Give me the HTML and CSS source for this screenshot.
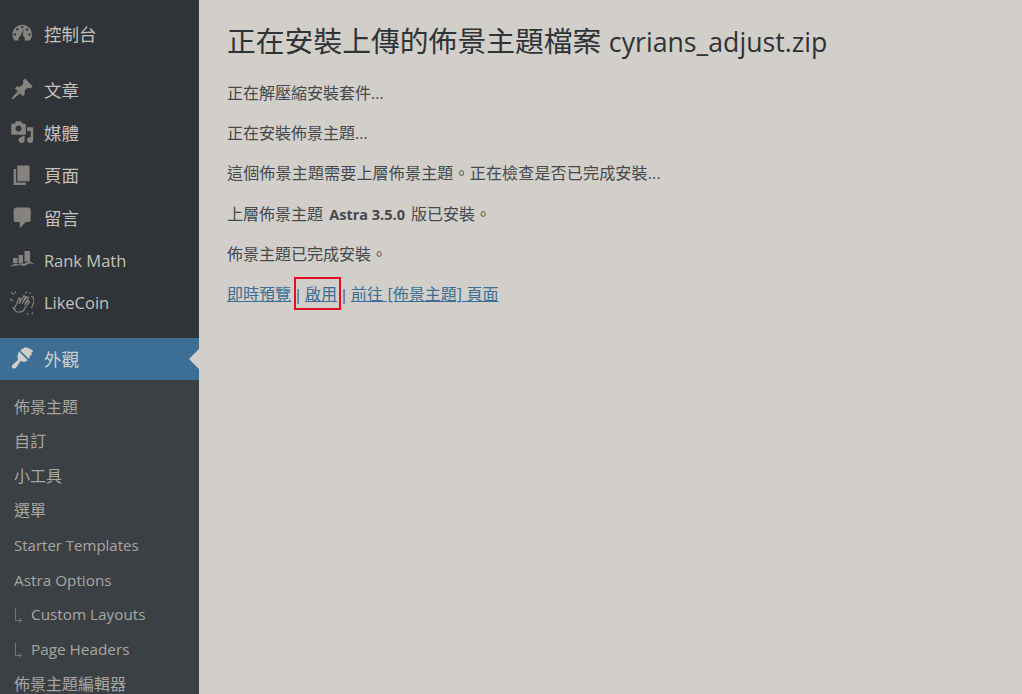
FILE: index.html
```html
<!DOCTYPE html>
<html lang="zh-TW">
<head>
    <meta charset="UTF-8">
    <meta name="viewport" content="width=device-width, initial-scale=1.0">
    <title>正在安裝上傳的佈景主題檔案</title>
    <link rel="stylesheet" href="styles.css">
</head>
<body>
    <div class="sidebar">
        <div class="menu-item first">
            <svg class="icon" viewBox="0 0 20 20"><path fill-rule="evenodd" d="M3.760 16h12.480c1.100-1.370 1.760-3.110 1.760-5 0-4.420-3.580-8-8-8s-8 3.580-8 8c0 1.890.66 3.630 1.760 5zM10 4c.55 0 1 .45 1 1s-.45 1-1 1-1-.45-1-1 .45-1 1-1zM6 6c.55 0 1 .45 1 1s-.45 1-1 1-1-.45-1-1 .45-1 1-1zm8 0c.55 0 1 .45 1 1s-.45 1-1 1-1-.45-1-1 .45-1 1-1zm-5.370 6.380L11 7l-.43 5.380c.97.46 1.630 1.310 1.630 2.290 0 .5-.17.97-.45 1.330H7.450c-.28-.36-.45-.83-.45-1.330 0-.98.66-1.830 1.630-2.290zM4 10c.55 0 1 .45 1 1s-.45 1-1 1-1-.45-1-1 .45-1 1-1zm12 0c.55 0 1 .45 1 1s-.45 1-1 1-1-.45-1-1 .45-1 1-1z"/></svg>
            <span>控制台</span>
        </div>
        <div class="menu-item gap">
            <svg class="icon" viewBox="0 0 20 20"><path d="M10.440 3.020l1.820-1.820 6.360 6.350-1.830 1.820c-1.050-.68-2.480-.57-3.410.36l-.75.75c-.92.93-1.040 2.350-.35 3.410l-1.830 1.820-2.410-2.410-2.800 2.790c-.42.42-3.380 2.710-3.800 2.290s1.860-3.390 2.280-3.810l2.790-2.790L4.100 9.360l1.830-1.820c1.050.69 2.480.57 3.400-.36l.75-.75c.93-.92 1.050-2.350.36-3.410z"/></svg>
            <span>文章</span>
        </div>
        <div class="menu-item">
            <svg class="icon" viewBox="0 0 20 20"><path fill-rule="evenodd" d="M13 11V4c0-.55-.45-1-1-1h-1.670L9 1H5L3.670 3H2c-.55 0-1 .45-1 1v7c0 .55.45 1 1 1h10c.55 0 1-.45 1-1zM7 4.500c1.380 0 2.500 1.120 2.500 2.500S8.380 9.500 7 9.500 4.500 8.380 4.500 7 5.620 4.500 7 4.500zM14 6h5v10.500c0 1.380-1.120 2.500-2.500 2.500S14 17.880 14 16.500s1.120-2.500 2.500-2.500c.17 0 .34.020.5.050V9h-3V6zm-4 8.050V13h2v3.500c0 1.380-1.120 2.500-2.500 2.500S7 17.880 7 16.500 8.120 14 9.500 14c.17 0 .34.020.5.050z"/></svg>
            <span>媒體</span>
        </div>
        <div class="menu-item">
            <svg class="icon" viewBox="0 0 20 20"><path d="M6 15V2h10v13H6zm-1 1h8v2H3V5h2v11z"/></svg>
            <span>頁面</span>
        </div>
        <div class="menu-item">
            <svg class="icon" viewBox="0 0 20 20"><path d="M5 2h10c1.100 0 2 .9 2 2v8c0 1.100-.9 2-2 2h-2l-5 5v-5H5c-1.100 0-2-.9-2-2V4c0-1.100.9-2 2-2z"/></svg>
            <span>留言</span>
        </div>
        <div class="menu-item">
            <svg class="icon" viewBox="0 0 24.400 24.400"><path d="M3 10h4.500v5H3zM8.500 7H13v8.500H8.500zM14.500 3H20v10.500h-5.500z"/><path d="M0 18.500l5-3 4.500 1 5-1 5-2.500 5 3-5-.8-5 2.800-5.500-1z"/></svg>
            <span>Rank Math</span>
        </div>
        <div class="menu-item">
            <svg class="icon line" viewBox="0 0 24.400 24.400"><path d="M6 14l3-7 1.500.7-1.500 5 5-8 1.500 1-3.500 7 5-7 1.500 1-4 7 4-4 1 1-4.500 6c-1 3-3 4.500-6 4.500-3 0-4.500-2-4.500-4.500z"/><path d="M15 2l2-1M19 2.500l2-.5M21 5.500l2.500 1 .5 4.500-2.500 6"/><path d="M1.500 1l2 3M5 .5l.5 2M0 8l3 2M2.500 16l2 3M17 23.500l1-1.500M22 23l1-1.500"/></svg>
            <span>LikeCoin</span>
        </div>
        <div class="menu-item gap current">
            <svg class="icon" viewBox="0 0 20 20"><path d="M8.300 3.400l7.300 7.300c.8-1.200 1-3.100 1-3.100.2-.7 1.500-.2 1.800-.9-.4-.3-1.200-.4-1.100-1.100.2-.7 1.700-.8 1.700-1.600-1.600-1.100-4-2.700-6.500-2.900z"/><path d="M7.300 4.400l7.300 7.300-2.300 1.200c-.8.400-1.700.2-2.300-.3l-1.300-.2-3.300 4.800c-.9 1.200-2.400 1.700-3.300 1-.9-.7-.8-2 .3-3l4.200-3.800-.2-1.400c-.4-.6-.5-1.400-.2-2.100z"/></svg>
            <span>外觀</span>
        </div>
        <ul class="submenu">
            <li>佈景主題</li>
            <li>自訂</li>
            <li>小工具</li>
            <li>選單</li>
            <li>Starter Templates</li>
            <li>Astra Options</li>
            <li><svg class="arrow" viewBox="0 0 9 15"><path d="M1.500 0v12.500h6M5 10l2.500 2.500L5 15"/></svg>Custom Layouts</li>
            <li><svg class="arrow" viewBox="0 0 9 15"><path d="M1.500 0v12.500h6M5 10l2.500 2.500L5 15"/></svg>Page Headers</li>
            <li>佈景主題編輯器</li>
        </ul>
    </div>

    <div class="content">
        <h1>正在安裝上傳的佈景主題檔案 <span class="latin">cyrians_adjust.zip</span></h1>
        <p>正在解壓縮安裝套件...</p>
        <p>正在安裝佈景主題...</p>
        <p class="loose">這個佈景主題需要上層佈景主題。正在檢查是否已完成安裝...</p>
        <p>上層佈景主題 <strong class="latin">Astra 3.5.0</strong> 版已安裝。</p>
        <p>佈景主題已完成安裝。</p>
        <p class="links"><a href="#">即時預覽</a> <span class="mark"><span class="pipe">|</span> <a href="#">啟用</a></span> <span class="pipe">|</span> <a class="wide" href="#">前往 [佈景主題] 頁面</a></p>
    </div>
</body>
</html>
```

FILE: styles.css
```css
body {
    margin: 0;
    display: flex;
    height: 694px;
    overflow: hidden;
    font-family: "Open Sans", "Noto Sans CJK TC", sans-serif;
    background-color: #d2cfca;
    color: #45494c;
}
.sidebar {
    width: 199px;
    flex-shrink: 0;
    background-color: #303438;
    color: #c4c1bc;
    overflow: hidden;
}
.menu-item {
    display: flex;
    align-items: center;
    box-sizing: border-box;
    height: 42.700px;
    padding-left: 9.500px;
    font-size: 17.500px;
    position: relative;
}
.menu-item.first {
    margin-top: 12.300px;
}
.menu-item.gap {
    margin-top: 13px;
}
.menu-item:nth-child(6),
.menu-item:nth-child(7) {
    font-size: 16.500px;
}
.icon {
    width: 24.400px;
    height: 24.400px;
    margin-right: 10px;
    fill: #86837f;
    flex-shrink: 0;
}
.icon.line {
    fill: none;
    stroke: #86837f;
    stroke-width: 1.200;
}
.menu-item.current {
    margin-top: 13.800px;
    height: 42px;
    padding-bottom: 1px;
    background-color: #3c6e96;
    color: #d2cfca;
}
.menu-item.current .icon {
    fill: #d2cfca;
}
.menu-item.current::after {
    content: "";
    position: absolute;
    right: 0;
    top: 50%;
    margin-top: -10px;
    border: 10px solid transparent;
    border-right-color: #d2cfca;
    border-left-width: 0;
}
.submenu {
    list-style: none;
    margin: 0;
    padding: 9.600px 0 0;
    background-color: #3b4044;
    color: #a9a6a2;
}
.submenu li {
    height: 34.650px;
    line-height: 34.650px;
    padding-left: 14px;
    white-space: nowrap;
    font-size: 15.300px;
}
.submenu li:nth-child(-n+4),
.submenu li:last-child {
    font-size: 16px;
}
.submenu li:nth-child(5) {
    font-size: 15px;
}
.arrow {
    width: 9px;
    height: 15px;
    margin-right: 8px;
    vertical-align: -3px;
    fill: none;
    stroke: #7d736c;
    stroke-width: 1;
}
.content {
    flex: 1;
    padding: 0 28px;
}
h1 {
    font-size: 28.800px;
    font-weight: 400;
    line-height: 36px;
    margin: 23px 0 23px;
    color: #2f3336;
}
h1 .latin {
    font-size: 26.700px;
}
p {
    font-size: 16px;
    line-height: 21px;
    margin: 0 0 19.200px;
    word-spacing: 2px;
}
p.loose {
    letter-spacing: .18px;
}
strong.latin {
    font-size: 14.500px;
    word-spacing: 0;
}
a {
    color: #3c6e96;
}
.links {
    word-spacing: -1.200px;
}
a.wide {
    word-spacing: .4px;
}
.pipe {
    font-size: 14.600px;
}
.mark {
    position: relative;
}
.mark::after {
    content: "";
    position: absolute;
    left: 0;
    right: -4px;
    top: -6px;
    bottom: -5px;
    border: 2px solid #e01020;
}
```
